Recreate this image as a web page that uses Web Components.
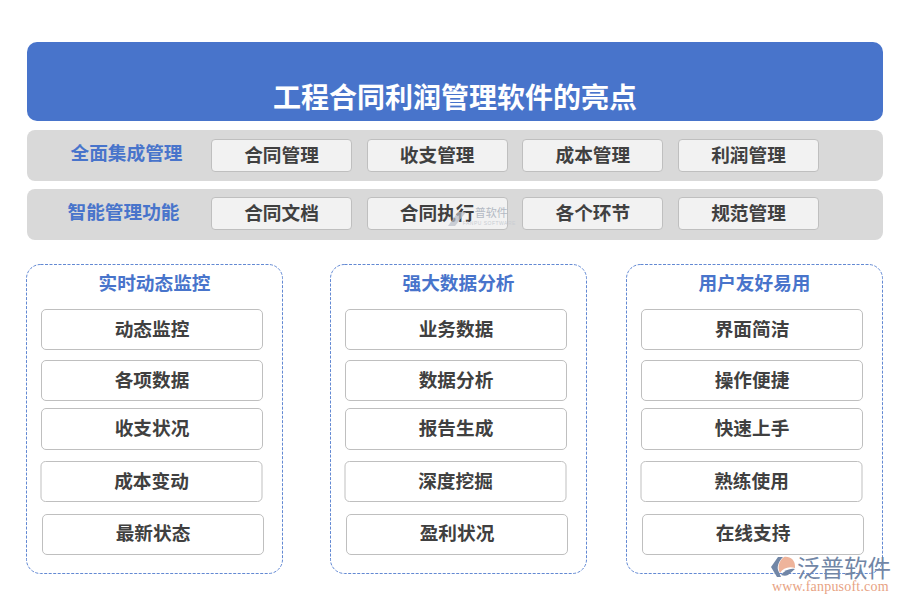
<!DOCTYPE html>
<html lang="zh">
<head>
<meta charset="utf-8">
<title>工程合同利润管理软件的亮点</title>
<style>
  html, body { margin: 0; padding: 0; background: #fff; }
  body { font-family: "Noto Sans CJK SC", "Noto Sans", sans-serif; color: #404040; }
</style>
</head>
<body>
<fp-page>
  <fp-banner>工程合同利润管理软件的亮点</fp-banner>
  <fp-row label="全面集成管理" shift="0">
    <fp-chip>合同管理</fp-chip>
    <fp-chip>收支管理</fp-chip>
    <fp-chip>成本管理</fp-chip>
    <fp-chip>利润管理</fp-chip>
  </fp-row>
  <fp-row label="智能管理功能" shift="-3">
    <fp-chip>合同文档</fp-chip>
    <fp-chip>合同执行<fp-watermark></fp-watermark></fp-chip>
    <fp-chip>各个环节</fp-chip>
    <fp-chip>规范管理</fp-chip>
  </fp-row>
  <fp-columns>
    <fp-panel heading="实时动态监控">
      <fp-item>动态监控</fp-item>
      <fp-item>各项数据</fp-item>
      <fp-item>收支状况</fp-item>
      <fp-item>成本变动</fp-item>
      <fp-item>最新状态</fp-item>
    </fp-panel>
    <fp-panel heading="强大数据分析">
      <fp-item>业务数据</fp-item>
      <fp-item>数据分析</fp-item>
      <fp-item>报告生成</fp-item>
      <fp-item>深度挖掘</fp-item>
      <fp-item>盈利状况</fp-item>
    </fp-panel>
    <fp-panel heading="用户友好易用">
      <fp-item>界面简洁</fp-item>
      <fp-item>操作便捷</fp-item>
      <fp-item>快速上手</fp-item>
      <fp-item>熟练使用</fp-item>
      <fp-item>在线支持</fp-item>
    </fp-panel>
  </fp-columns>
  <fp-logo></fp-logo>
</fp-page>

<script>
class FpPage extends HTMLElement {
  connectedCallback() {
    this.attachShadow({ mode: 'open' });
    this.shadowRoot.innerHTML = `
      <style>
        :host {
          display: block;
          position: relative;
          box-sizing: border-box;
          width: 900px;
          height: 600px;
          padding: 42px 17px 0 27px;
          overflow: hidden;
        }
      </style>
      <slot></slot>
    `;
  }
}

class FpBanner extends HTMLElement {
  connectedCallback() {
    this.attachShadow({ mode: 'open' });
    this.shadowRoot.innerHTML = `
      <style>
        :host {
          display: flex;
          align-items: flex-end;
          justify-content: center;
          box-sizing: border-box;
          height: 79px;
          padding-bottom: 4px;
          background: #4874cb;
          border-radius: 10px;
          color: #fff;
          font-size: 28px;
          font-weight: 700;
          line-height: 42px;
        }
      </style>
      <slot></slot>
    `;
  }
}

class FpRow extends HTMLElement {
  connectedCallback() {
    this.attachShadow({ mode: 'open' });
    const shift = Number(this.getAttribute('shift') || 0);
    this.shadowRoot.innerHTML = `
      <style>
        :host {
          display: flex;
          align-items: center;
          box-sizing: border-box;
          height: 51px;
          margin-top: 9px;
          padding-left: 184px;
          background: #d9d9d9;
          border-radius: 8px;
          position: relative;
        }
        :host(:nth-of-type(2)) { margin-top: 8px; padding-bottom: 2px; }
        .label {
          position: absolute;
          left: ${43.5 + shift}px;
          top: 50%;
          transform: translateY(-50%);
          margin-top: -4px;
          color: #4874cb;
          font-size: 18.67px;
          font-weight: 700;
          line-height: 28px;
          white-space: nowrap;
        }
        .chips { display: flex; gap: 14.67px; }
      </style>
      <div class="label">${this.getAttribute('label')}</div>
      <div class="chips"><slot></slot></div>
    `;
  }
}

class FpChip extends HTMLElement {
  connectedCallback() {
    this.attachShadow({ mode: 'open' });
    this.shadowRoot.innerHTML = `
      <style>
        :host {
          display: flex;
          align-items: center;
          justify-content: center;
          position: relative;
          box-sizing: border-box;
          width: 141px;
          height: 33px;
          padding-bottom: 3px;
          background: #f2f2f2;
          border: 1px solid #bfbfbf;
          border-radius: 4px;
          color: #404040;
          font-size: 18.67px;
          font-weight: 700;
          line-height: 28px;
        }
      </style>
      <slot></slot>
    `;
  }
}

class FpColumns extends HTMLElement {
  connectedCallback() {
    this.attachShadow({ mode: 'open' });
    this.shadowRoot.innerHTML = `
      <style>
        :host {
          display: grid;
          grid-template-columns: 257px 257px 257px;
          column-gap: 47px;
          margin: 24px 0 0 -1px;
          width: 857px;
        }
        ::slotted(:nth-child(3)) { margin-left: -8px; }
      </style>
      <slot></slot>
    `;
  }
}

class FpPanel extends HTMLElement {
  connectedCallback() {
    this.attachShadow({ mode: 'open' });
    this.shadowRoot.innerHTML = `
      <style>
        :host {
          display: block;
          position: relative;
          box-sizing: border-box;
          width: 257px;
          height: 310px;
          padding: 4px 15px 0;
        }
        /* tighter dash than a css dashed border gives */
        svg { position: absolute; left: 0; top: 0; pointer-events: none; }
        .heading {
          height: 32px;
          margin-bottom: 9px;
          color: #4874cb;
          font-size: 18.67px;
          font-weight: 700;
          line-height: 28px;
          text-align: center;
        }
        .items { display: flex; flex-direction: column; }
        ::slotted(:nth-child(2)) { margin-top: 10px; }
        ::slotted(:nth-child(3)) { margin-top: 7px; height: 42px; padding-bottom: 4px; }
        ::slotted(:nth-child(4)) { margin-top: 11px; transform: translateX(-.5px); }
        ::slotted(:nth-child(5)) { margin-top: 12px; padding-bottom: 5px; transform: translateX(1px); }
      </style>
      <svg width="257" height="310">
        <rect x=".5" y=".5" width="256" height="309" rx="14" fill="none" stroke="#4874cb" stroke-opacity=".85" stroke-dasharray="3 1.5"/>
      </svg>
      <div class="heading">${this.getAttribute('heading')}</div>
      <div class="items"><slot></slot></div>
    `;
  }
}

class FpItem extends HTMLElement {
  connectedCallback() {
    this.attachShadow({ mode: 'open' });
    this.shadowRoot.innerHTML = `
      <style>
        :host {
          display: flex;
          align-items: center;
          justify-content: center;
          box-sizing: border-box;
          width: 222px;
          height: 41px;
          padding-bottom: 3px;
          background: #fff;
          border: 1px solid #bfbfbf;
          border-radius: 5px;
          color: #404040;
          font-size: 18.67px;
          font-weight: 700;
          line-height: 28px;
        }
      </style>
      <slot></slot>
    `;
  }
}

// faint stamp lying over the second chip of the lower row
class FpWatermark extends HTMLElement {
  connectedCallback() {
    this.attachShadow({ mode: 'open' });
    this.shadowRoot.innerHTML = `
      <style>
        :host {
          position: absolute;
          left: 78px;
          top: 5px;
          width: 62px;
          height: 26px;
          pointer-events: none;
          font-weight: 400;
        }
        svg { position: absolute; left: 0; top: 8px; }
        .cn {
          position: absolute;
          left: 29px;
          top: 1px;
          color: #b4bac4;
          font-size: 11px;
          line-height: 16px;
          white-space: nowrap;
        }
        .en {
          position: absolute;
          left: 17px;
          top: 17px;
          color: #c9cdd3;
          font-family: "Liberation Sans", sans-serif;
          font-size: 5px;
          line-height: 6px;
          letter-spacing: .5px;
          white-space: nowrap;
        }
      </style>
      <svg width="22" height="16" viewBox="0 0 22 16">
        <path d="M12 1 L20 1 L9 15 L2 15 Z" fill="#b8bec8" opacity=".7"/>
      </svg>
      <div class="cn">普软件</div>
      <div class="en">FANPU SOFTWARE</div>
    `;
  }
}

// corner logo, sits over the third panel's border
class FpLogo extends HTMLElement {
  connectedCallback() {
    this.attachShadow({ mode: 'open' });
    this.shadowRoot.innerHTML = `
      <style>
        :host {
          position: absolute;
          left: 770px;
          top: 553px;
          width: 125px;
          height: 40px;
        }
        svg { position: absolute; left: 0; top: 3px; }
        .cn {
          position: absolute;
          left: 27px;
          top: 1px;
          height: 26px;
          color: #7186a6;
          font-size: 23.5px;
          font-weight: 400;
          line-height: 26px;
          white-space: nowrap;
        }
        .url {
          position: absolute;
          left: 2px;
          top: 28px;
          color: #e8a283;
          font-family: "Liberation Serif", serif;
          font-size: 14px;
          font-weight: 400;
          line-height: 11px;
          letter-spacing: .2px;
          white-space: nowrap;
        }
      </style>
      <svg width="26" height="25" viewBox="0 0 26 25">
        <path d="M1 11 L8 1 L13 1 C9 5 7 10 8 14 L11 21 L7 21 Z" fill="#7186a6"/>
        <path d="M14 1 C20 0 25 4 25 10 L25 12 C19 10 13 12 10 17 C7 11 9 5 14 1 Z" fill="#eeb49b"/>
        <path d="M11 19 C15 14 20 12 25 13 L18 19 C16 20 14 20 11 19 Z" fill="#7186a6"/>
      </svg>
      <div class="cn">泛普软件</div>
      <div class="url">www.fanpusoft.com</div>
    `;
  }
}

customElements.define('fp-page', FpPage);
customElements.define('fp-banner', FpBanner);
customElements.define('fp-row', FpRow);
customElements.define('fp-chip', FpChip);
customElements.define('fp-columns', FpColumns);
customElements.define('fp-panel', FpPanel);
customElements.define('fp-item', FpItem);
customElements.define('fp-watermark', FpWatermark);
customElements.define('fp-logo', FpLogo);
</script>
</body>
</html>
